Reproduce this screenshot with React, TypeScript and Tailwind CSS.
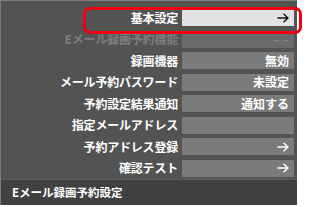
import React from "react";

type Row = {
    label: string;
    value?: string;
    arrow?: boolean;
    disabled?: boolean;
    active?: boolean;
};

const rows: Row[] = [
    { label: "基本設定", arrow: true, active: true },
    { label: "Eメール録画予約機能", value: "– –", disabled: true },
    { label: "録画機器", value: "無効" },
    { label: "メール予約パスワード", value: "未設定" },
    { label: "予約設定結果通知", value: "通知する" },
    { label: "指定メールアドレス" },
    { label: "予約アドレス登録", arrow: true },
    { label: "確認テスト", arrow: true },
];

const Arrow = ({ color }: { color: string }) => (
    <svg width="12" height="10" viewBox="0 0 12 10" fill="none" stroke={color} strokeWidth="1.4">
        <path d="M0.5 5 H11 M6.5 0.8 L11 5 L6.5 9.2" />
    </svg>
);

export default function App() {
    return (
        <div
            className="w-[310px] h-[207px] bg-white overflow-hidden"
            style={{ fontFamily: '"Noto Sans CJK JP", "Noto Sans", sans-serif' }}
        >
            <div className="relative w-[297px] h-[205px] bg-[#535353] border-l border-t border-[#7c7c7c] flex flex-col">
                <div className="flex flex-col gap-[4.5px] pt-[8px] flex-1">
                    {rows.map((r) => (
                        <div key={r.label} className="flex items-center h-[17px]">
                            <div
                                className={
                                    "w-[181px] pr-[4px] text-right text-[12px] font-bold leading-none tracking-[-0.2px] " +
                                    (r.disabled ? "text-[#7e7e7e]" : "text-white")
                                }
                            >
                                {r.label}
                            </div>
                            <div
                                className={
                                    "w-[112px] h-[17px] flex items-center justify-end pr-[5px] text-[12px] font-bold leading-none " +
                                    (r.active
                                        ? "bg-[#e2e2e2]"
                                        : r.disabled
                                        ? "bg-[#6a6a6a] text-[#858585]"
                                        : "bg-[#7b7b7b] text-white")
                                }
                            >
                                {r.arrow ? <Arrow color={r.active ? "#111" : "#fff"} /> : r.value}
                            </div>
                        </div>
                    ))}
                </div>
                <div className="h-[26px] bg-[#404040] border-t border-[#5e5e5e] flex items-center pl-[11px] text-[11.5px] font-bold text-white">
                    Eメール録画予約設定
                </div>
                <div className="absolute left-[82px] top-[6px] w-[219px] h-[27px] border-[3px] border-[#f00010] rounded-[7px]" />
            </div>
        </div>
    );
}
